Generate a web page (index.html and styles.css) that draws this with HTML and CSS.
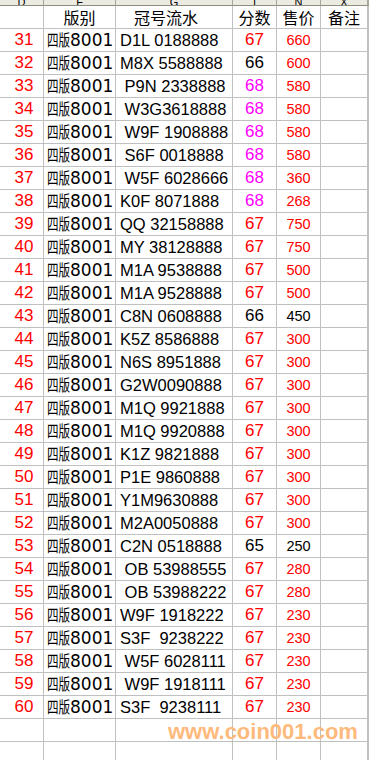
FILE: index.html
```html
<!DOCTYPE html>
<html lang="zh-CN">
<head>
<meta charset="utf-8">
<title>四版8001</title>
<link rel="stylesheet" href="styles.css">
</head>
<body>
<div class="sheet">
<table class="grid">
<colgroup>
<col class="c1"><col class="c2"><col class="c3"><col class="c4"><col class="c5"><col class="c6"><col class="c7">
</colgroup>
<thead>
<tr class="letters">
<th><div class="cut"><span>D</span></div></th>
<th><div class="cut"><span>F</span></div></th>
<th><div class="cut"><span>G</span></div></th>
<th><div class="cut"><span>I</span></div></th>
<th><div class="cut"><span>N</span></div></th>
<th><div class="cut"><span>X</span></div></th>
<th></th>
</tr>
<tr class="head">
<td></td>
<td class="hc">版别</td>
<td class="hl">冠号流水</td>
<td class="hc">分数</td>
<td class="hc">售价</td>
<td class="hc">备注</td>
<td></td>
</tr>
</thead>
<tbody>
<tr><td class="n">31</td><td class="v"><span class="cn">四版</span>8001</td><td class="s">D1L 0188888</td><td class="p red">67</td><td class="pr red">660</td><td></td><td></td></tr>
<tr><td class="n">32</td><td class="v"><span class="cn">四版</span>8001</td><td class="s">M8X 5588888</td><td class="p">66</td><td class="pr red">600</td><td></td><td></td></tr>
<tr><td class="n">33</td><td class="v"><span class="cn">四版</span>8001</td><td class="s"> P9N 2338888</td><td class="p mag">68</td><td class="pr red">580</td><td></td><td></td></tr>
<tr><td class="n">34</td><td class="v"><span class="cn">四版</span>8001</td><td class="s"> W3G3618888</td><td class="p mag">68</td><td class="pr red">580</td><td></td><td></td></tr>
<tr><td class="n">35</td><td class="v"><span class="cn">四版</span>8001</td><td class="s"> W9F 1908888</td><td class="p mag">68</td><td class="pr red">580</td><td></td><td></td></tr>
<tr><td class="n">36</td><td class="v"><span class="cn">四版</span>8001</td><td class="s"> S6F 0018888</td><td class="p mag">68</td><td class="pr red">580</td><td></td><td></td></tr>
<tr><td class="n">37</td><td class="v"><span class="cn">四版</span>8001</td><td class="s"> W5F 6028666</td><td class="p mag">68</td><td class="pr red">360</td><td></td><td></td></tr>
<tr><td class="n">38</td><td class="v"><span class="cn">四版</span>8001</td><td class="s">K0F 8071888</td><td class="p mag">68</td><td class="pr red">268</td><td></td><td></td></tr>
<tr><td class="n">39</td><td class="v"><span class="cn">四版</span>8001</td><td class="s">QQ 32158888</td><td class="p red">67</td><td class="pr red">750</td><td></td><td></td></tr>
<tr><td class="n">40</td><td class="v"><span class="cn">四版</span>8001</td><td class="s">MY 38128888</td><td class="p red">67</td><td class="pr red">750</td><td></td><td></td></tr>
<tr><td class="n">41</td><td class="v"><span class="cn">四版</span>8001</td><td class="s">M1A 9538888</td><td class="p red">67</td><td class="pr red">500</td><td></td><td></td></tr>
<tr><td class="n">42</td><td class="v"><span class="cn">四版</span>8001</td><td class="s">M1A 9528888</td><td class="p red">67</td><td class="pr red">500</td><td></td><td></td></tr>
<tr><td class="n">43</td><td class="v"><span class="cn">四版</span>8001</td><td class="s">C8N 0608888</td><td class="p">66</td><td class="pr">450</td><td></td><td></td></tr>
<tr><td class="n">44</td><td class="v"><span class="cn">四版</span>8001</td><td class="s">K5Z 8586888</td><td class="p red">67</td><td class="pr red">300</td><td></td><td></td></tr>
<tr><td class="n">45</td><td class="v"><span class="cn">四版</span>8001</td><td class="s">N6S 8951888</td><td class="p red">67</td><td class="pr red">300</td><td></td><td></td></tr>
<tr><td class="n">46</td><td class="v"><span class="cn">四版</span>8001</td><td class="s">G2W0090888</td><td class="p red">67</td><td class="pr red">300</td><td></td><td></td></tr>
<tr><td class="n">47</td><td class="v"><span class="cn">四版</span>8001</td><td class="s">M1Q 9921888</td><td class="p red">67</td><td class="pr red">300</td><td></td><td></td></tr>
<tr><td class="n">48</td><td class="v"><span class="cn">四版</span>8001</td><td class="s">M1Q 9920888</td><td class="p red">67</td><td class="pr red">300</td><td></td><td></td></tr>
<tr><td class="n">49</td><td class="v"><span class="cn">四版</span>8001</td><td class="s">K1Z 9821888</td><td class="p red">67</td><td class="pr red">300</td><td></td><td></td></tr>
<tr><td class="n">50</td><td class="v"><span class="cn">四版</span>8001</td><td class="s">P1E 9860888</td><td class="p red">67</td><td class="pr red">300</td><td></td><td></td></tr>
<tr><td class="n">51</td><td class="v"><span class="cn">四版</span>8001</td><td class="s">Y1M9630888</td><td class="p red">67</td><td class="pr red">300</td><td></td><td></td></tr>
<tr><td class="n">52</td><td class="v"><span class="cn">四版</span>8001</td><td class="s">M2A0050888</td><td class="p red">67</td><td class="pr red">300</td><td></td><td></td></tr>
<tr><td class="n">53</td><td class="v"><span class="cn">四版</span>8001</td><td class="s">C2N 0518888</td><td class="p">65</td><td class="pr">250</td><td></td><td></td></tr>
<tr><td class="n">54</td><td class="v"><span class="cn">四版</span>8001</td><td class="s"> OB 53988555</td><td class="p red">67</td><td class="pr red">280</td><td></td><td></td></tr>
<tr><td class="n">55</td><td class="v"><span class="cn">四版</span>8001</td><td class="s"> OB 53988222</td><td class="p red">67</td><td class="pr red">280</td><td></td><td></td></tr>
<tr><td class="n">56</td><td class="v"><span class="cn">四版</span>8001</td><td class="s">W9F 1918222</td><td class="p red">67</td><td class="pr red">230</td><td></td><td></td></tr>
<tr><td class="n">57</td><td class="v"><span class="cn">四版</span>8001</td><td class="s">S3F  9238222</td><td class="p red">67</td><td class="pr red">230</td><td></td><td></td></tr>
<tr><td class="n">58</td><td class="v"><span class="cn">四版</span>8001</td><td class="s"> W5F 6028111</td><td class="p red">67</td><td class="pr red">230</td><td></td><td></td></tr>
<tr><td class="n">59</td><td class="v"><span class="cn">四版</span>8001</td><td class="s"> W9F 1918111</td><td class="p red">67</td><td class="pr red">230</td><td></td><td></td></tr>
<tr><td class="n">60</td><td class="v"><span class="cn">四版</span>8001</td><td class="s">S3F  9238111</td><td class="p red">67</td><td class="pr red">230</td><td></td><td></td></tr>
<tr><td></td><td></td><td></td><td></td><td></td><td></td><td></td></tr>
<tr><td></td><td></td><td></td><td></td><td></td><td></td><td></td></tr>
</tbody>
</table>
<div class="mark">www.coin001.com</div>
</div>
</body>
</html>
```
FILE: styles.css
```css
html, body {
  margin: 0;
  padding: 0;
  background: #ffffff;
}
body {
  width: 369px;
  height: 760px;
  overflow: hidden;
  font-family: "Liberation Sans", "Noto Sans CJK SC", sans-serif;
}
.sheet {
  position: relative;
  width: 369px;
}
.grid {
  table-layout: fixed;
  border-collapse: separate;
  border-spacing: 0;
  width: 369px;
}
.c1 { width: 44px; }
.c2 { width: 72px; }
.c3 { width: 117px; }
.c4 { width: 44px; }
.c5 { width: 44px; }
.c6 { width: 47px; }
.c7 { width: 1px; }

.grid th,
.grid td {
  box-sizing: border-box;
  padding: 0;
  border-right: 1px solid #c0c0c0;
  border-bottom: 1px solid #c0c0c0;
  height: 23px;
  line-height: 22px;
  white-space: pre;
  vertical-align: top;
  color: #000;
}

/* column letter strip (cut off at the top) */
.letters th {
  height: 6px;
  line-height: 5px;
  background: #ecebe2;
  border-right: 1px solid #aca899;
  border-bottom: 1px solid #8e8c80;
  font-weight: normal;
  overflow: hidden;
}
.cut {
  height: 5px;
  overflow: hidden;
  display: flex;
  justify-content: center;
  align-items: flex-end;
}
.cut span {
  font-family: "Liberation Sans", sans-serif;
  font-size: 11px;
  line-height: 11px;
  flex: none;
  margin-bottom: -3px;
}

/* header row */
.head td {
  font-family: "Noto Sans CJK SC", sans-serif;
  font-size: 16px;
  line-height: 21px;
  padding-top: 1px;
}
.hc { text-align: center; }
.hl { text-align: left; padding-left: 18px !important; }

/* data columns */
.n {
  color: #ff0000 !important;
  text-align: center;
  padding-left: 5px !important;
  font-size: 17px;
}
.v {
  font-family: "DejaVu Sans", sans-serif;
  font-size: 17px;
  padding-left: 3px !important;
}
.cn {
  display: inline-block;
  font-family: "Noto Sans CJK SC", sans-serif;
  font-size: 16px;
  line-height: 18px;
  transform: scaleX(0.72);
  transform-origin: 0 50%;
  margin-right: -9px;
}
.s {
  font-size: 16.5px;
  padding-left: 4px !important;
}
.p {
  text-align: center;
  font-size: 17px;
}
.pr {
  text-align: center;
  font-size: 14.5px;
  line-height: 21px !important;
  padding-top: 1px !important;
}
.red { color: #ff0000 !important; }
.mag { color: #ff00ff !important; }

/* watermark laid over the sheet */
.mark {
  position: absolute;
  left: 168px;
  top: 721px;
  font-family: "Liberation Sans", sans-serif;
  font-weight: bold;
  font-size: 22px;
  line-height: 22px;
  color: #fdba7c;
  white-space: nowrap;
}
```
